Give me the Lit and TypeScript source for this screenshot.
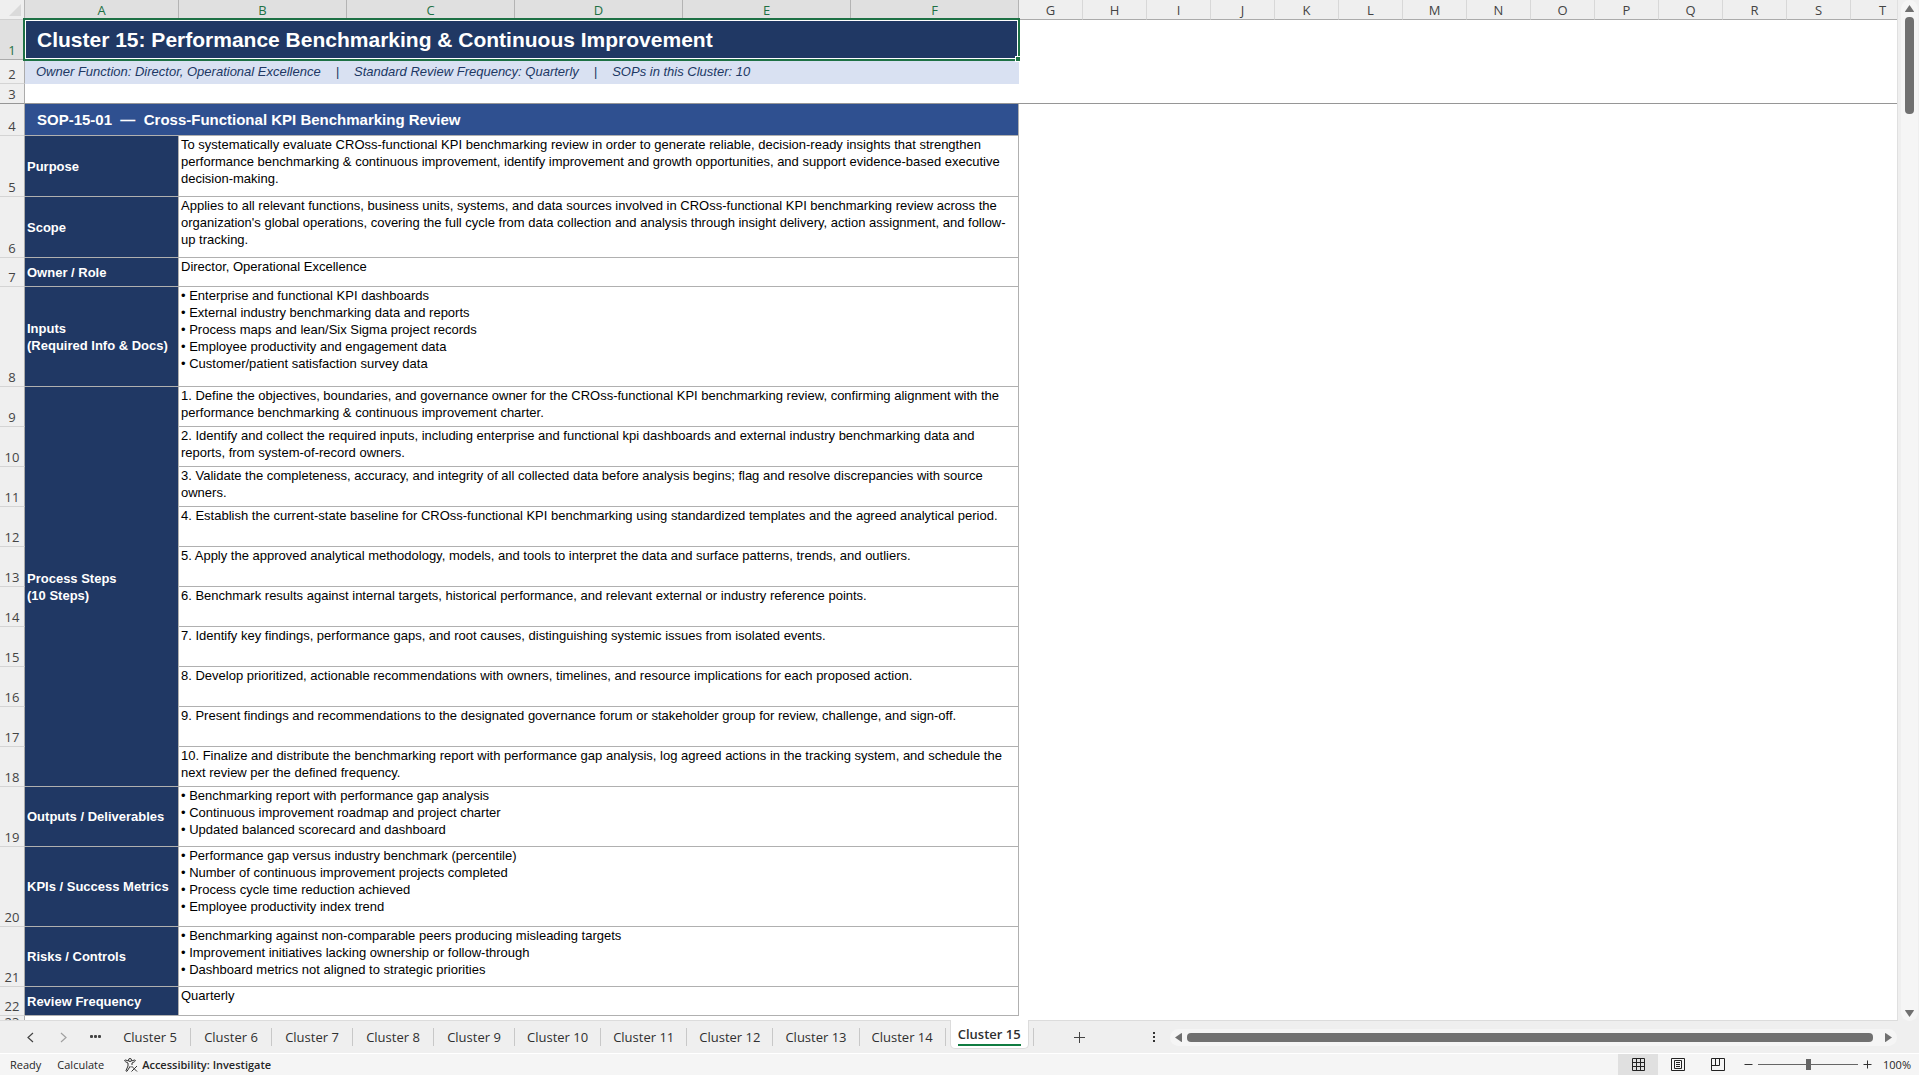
import { LitElement, html, css, svg, nothing } from "lit";
import { customElement, state } from "lit/decorators.js";
import { classMap } from "lit/directives/class-map.js";

interface SheetRow {
  n: number;
  height: number;
  label?: string;
  span?: number;
  lines: string[];
}

const MERGED_COLUMNS = ["A", "B", "C", "D", "E", "F"];
const PLAIN_COLUMNS = ["G", "H", "I", "J", "K", "L", "M", "N", "O", "P", "Q", "R", "S", "T"];

const ROWS: SheetRow[] = [
  {
    n: 5,
    height: 61,
    label: "Purpose",
    lines: [
      "To systematically evaluate CROss-functional KPI benchmarking review in order to generate reliable, decision-ready insights that strengthen",
      "performance benchmarking & continuous improvement, identify improvement and growth opportunities, and support evidence-based executive",
      "decision-making.",
    ],
  },
  {
    n: 6,
    height: 61,
    label: "Scope",
    lines: [
      "Applies to all relevant functions, business units, systems, and data sources involved in CROss-functional KPI benchmarking review across the",
      "organization's global operations, covering the full cycle from data collection and analysis through insight delivery, action assignment, and follow-",
      "up tracking.",
    ],
  },
  { n: 7, height: 29, label: "Owner / Role", lines: ["Director, Operational Excellence"] },
  {
    n: 8,
    height: 100,
    label: "Inputs\n(Required Info & Docs)",
    lines: [
      "• Enterprise and functional KPI dashboards",
      "• External industry benchmarking data and reports",
      "• Process maps and lean/Six Sigma project records",
      "• Employee productivity and engagement data",
      "• Customer/patient satisfaction survey data",
    ],
  },
  {
    n: 9,
    height: 40,
    label: "Process Steps\n(10 Steps)",
    span: 10,
    lines: [
      "1. Define the objectives, boundaries, and governance owner for the CROss-functional KPI benchmarking review, confirming alignment with the",
      "performance benchmarking & continuous improvement charter.",
    ],
  },
  {
    n: 10,
    height: 40,
    lines: [
      "2. Identify and collect the required inputs, including enterprise and functional kpi dashboards and external industry benchmarking data and",
      "reports, from system-of-record owners.",
    ],
  },
  {
    n: 11,
    height: 40,
    lines: [
      "3. Validate the completeness, accuracy, and integrity of all collected data before analysis begins; flag and resolve discrepancies with source",
      "owners.",
    ],
  },
  {
    n: 12,
    height: 40,
    lines: [
      "4. Establish the current-state baseline for CROss-functional KPI benchmarking using standardized templates and the agreed analytical period.",
    ],
  },
  {
    n: 13,
    height: 40,
    lines: [
      "5. Apply the approved analytical methodology, models, and tools to interpret the data and surface patterns, trends, and outliers.",
    ],
  },
  {
    n: 14,
    height: 40,
    lines: [
      "6. Benchmark results against internal targets, historical performance, and relevant external or industry reference points.",
    ],
  },
  {
    n: 15,
    height: 40,
    lines: [
      "7. Identify key findings, performance gaps, and root causes, distinguishing systemic issues from isolated events.",
    ],
  },
  {
    n: 16,
    height: 40,
    lines: [
      "8. Develop prioritized, actionable recommendations with owners, timelines, and resource implications for each proposed action.",
    ],
  },
  {
    n: 17,
    height: 40,
    lines: [
      "9. Present findings and recommendations to the designated governance forum or stakeholder group for review, challenge, and sign-off.",
    ],
  },
  {
    n: 18,
    height: 40,
    lines: [
      "10. Finalize and distribute the benchmarking report with performance gap analysis, log agreed actions in the tracking system, and schedule the",
      "next review per the defined frequency.",
    ],
  },
  {
    n: 19,
    height: 60,
    label: "Outputs / Deliverables",
    lines: [
      "• Benchmarking report with performance gap analysis",
      "• Continuous improvement roadmap and project charter",
      "• Updated balanced scorecard and dashboard",
    ],
  },
  {
    n: 20,
    height: 80,
    label: "KPIs / Success Metrics",
    lines: [
      "• Performance gap versus industry benchmark (percentile)",
      "• Number of continuous improvement projects completed",
      "• Process cycle time reduction achieved",
      "• Employee productivity index trend",
    ],
  },
  {
    n: 21,
    height: 60,
    label: "Risks / Controls",
    lines: [
      "• Benchmarking against non-comparable peers producing misleading targets",
      "• Improvement initiatives lacking ownership or follow-through",
      "• Dashboard metrics not aligned to strategic priorities",
    ],
  },
  { n: 22, height: 29, label: "Review Frequency", lines: ["Quarterly"] },
];

@customElement("sheet-grid")
class SheetGrid extends LitElement {
  static styles = css`
    :host {
      display: block;
      overflow: hidden;
      background: #fff;
      border-right: 1px solid #e0e0e0;
      border-bottom: 1px solid #dcdcdc;
      box-sizing: border-box;
    }
    table {
      table-layout: fixed;
      width: 1915px;
      border-collapse: separate;
      border-spacing: 0;
      font: 13px/17px "Liberation Sans", Arial, sans-serif;
      color: #000;
    }
    .c-head {
      width: 25px;
    }
    .c-label {
      width: 154px;
    }
    .c-wide {
      width: 168px;
    }
    .c-plain {
      width: 64px;
    }
    th,
    td {
      box-sizing: border-box;
      padding: 0;
      text-align: left;
      vertical-align: top;
      white-space: pre;
    }
    .row-head,
    .col-head {
      font: 13px/12px "Open Sans", "Noto Sans", sans-serif;
      color: #444;
      text-align: center;
      background: #efefef;
    }
    .col-head {
      height: 20px;
      vertical-align: bottom;
      padding-bottom: 3px;
      border-right: 1px solid #d8d8d8;
      border-bottom: 1px solid #ababab;
    }
    .col-head.on {
      background: #e0e0e0;
      color: #1e7145;
      border-right-color: #b4b4b4;
    }
    .corner {
      height: 20px;
      line-height: 0;
      white-space: normal;
      background: #efefef;
      border-right: 1px solid #b4b4b4;
      border-bottom: 1px solid #d0d0d0;
    }
    .corner svg {
      display: block;
      margin: 4px 0 0 9px;
    }
    .row-head {
      vertical-align: bottom;
      padding-bottom: 3px;
      border-right: 1px solid #ababab;
      border-bottom: 1px solid #d4d4d4;
    }
    .row-head.on {
      background: #e0e0e0;
      color: #1e7145;
      border-bottom-color: #ababab;
    }
    .row-head.last {
      padding-bottom: 0;
    }
    .frozen .row-head,
    .frozen td {
      border-bottom: 1px solid #969696;
    }
    .title {
      position: relative;
      height: 40px;
      background: #203864;
      color: #fff;
      font-size: 21px;
      line-height: 24px;
      font-weight: bold;
      vertical-align: middle;
      padding-left: 12px;
    }
    .selection {
      position: absolute;
      inset: -2px -1px -1px -2px;
      border: 2px solid #1e7145;
      box-shadow: inset 0 0 0 1px #fff;
      pointer-events: none;
      z-index: 1;
    }
    .handle {
      position: absolute;
      right: -3px;
      bottom: -3px;
      width: 4px;
      height: 4px;
      background: #1e7145;
      border: 1px solid #fff;
    }
    .meta {
      background: #d9e1f2;
      color: #203864;
      font-style: italic;
      vertical-align: middle;
      padding: 0 0 2px 11px;
    }
    .meta-items {
      display: flex;
      gap: 15px;
    }
    .section {
      background: #2f5090;
      color: #fff;
      font-size: 15px;
      font-weight: bold;
      vertical-align: middle;
      padding-left: 12px;
      border-right: 1px solid #b0b0b0;
      border-bottom: 1px solid #b0b0b0;
    }
    .label {
      background: #203864;
      color: #fff;
      font-weight: bold;
      vertical-align: middle;
      padding-left: 2px;
      border-right: 1px solid #b0b0b0;
      border-bottom: 1px solid #b0b0b0;
    }
    .value {
      padding-left: 2px;
      border-right: 1px solid #b0b0b0;
      border-bottom: 1px solid #b0b0b0;
    }
  `;

  private row(r: SheetRow) {
    return html`<tr style="height:${r.height}px">
      <th class="row-head" scope="row">${r.n}</th>
      ${r.label ? html`<th class="label" rowspan=${r.span ?? 1}>${r.label}</th>` : nothing}
      <td class="value" colspan="5">${r.lines.join("\n")}</td>
      <td colspan="14"></td>
    </tr>`;
  }

  render() {
    return html`<table>
      <colgroup>
        <col class="c-head" />
        <col class="c-label" />
        <col class="c-wide" span="5" />
        <col class="c-plain" span="14" />
      </colgroup>
      <thead>
        <tr>
          <td class="corner">
            <svg width="12" height="12" viewBox="0 0 12 12"><path d="M12 0V12H0Z" fill="#dadada" /></svg>
          </td>
          ${MERGED_COLUMNS.map((c) => html`<th class="col-head on" scope="col">${c}</th>`)}
          ${PLAIN_COLUMNS.map((c) => html`<th class="col-head" scope="col">${c}</th>`)}
        </tr>
      </thead>
      <tbody>
        <tr style="height:40px">
          <th class="row-head on" scope="row">1</th>
          <td class="title" colspan="6">Cluster 15: Performance Benchmarking &amp; Continuous Improvement<span class="selection"><span class="handle"></span></span></td>
          <td colspan="14"></td>
        </tr>
        <tr style="height:24px">
          <th class="row-head" scope="row">2</th>
          <td class="meta" colspan="6"><div class="meta-items"><span>Owner Function: Director, Operational Excellence</span><span>|</span><span>Standard Review Frequency: Quarterly</span><span>|</span><span>SOPs in this Cluster: 10</span></div></td>
          <td colspan="14"></td>
        </tr>
        <tr class="frozen" style="height:20px">
          <th class="row-head" scope="row">3</th>
          <td colspan="20"></td>
        </tr>
        <tr style="height:32px">
          <th class="row-head" scope="row">4</th>
          <td class="section" colspan="6">SOP-15-01  —  Cross-Functional KPI Benchmarking Review</td>
          <td colspan="14"></td>
        </tr>
        ${ROWS.map((r) => this.row(r))}
        <tr style="height:11px">
          <th class="row-head last" scope="row">23</th>
          <td colspan="20"></td>
        </tr>
      </tbody>
    </table>`;
  }
}

@customElement("scroll-track")
class ScrollTrack extends LitElement {
  static properties = { vertical: { type: Boolean, reflect: true } };
  declare vertical: boolean;

  static styles = css`
    :host {
      display: flex;
      align-items: center;
      background: #f5f5f5;
      border-radius: 9px;
      box-sizing: border-box;
      height: 17px;
      padding: 0 5px;
      gap: 5px;
    }
    :host([vertical]) {
      flex-direction: column;
      width: 17px;
      height: auto;
      padding: 5px 0 4px;
    }
    button {
      display: block;
      border: 0;
      padding: 0;
      background: none;
      line-height: 0;
      flex: none;
    }
    .lane {
      flex: 1;
      display: flex;
      min-width: 0;
      min-height: 0;
    }
    :host([vertical]) .lane {
      flex-direction: column;
    }
    .thumb {
      background: #707070;
      border-radius: 4px;
    }
    .thumb.h {
      height: 9px;
      flex: 1;
      margin-right: 7px;
    }
    .thumb.v {
      width: 9px;
      height: 97px;
    }
  `;

  render() {
    return this.vertical
      ? html`<button aria-label="Scroll up">
            <svg width="9" height="7" viewBox="0 0 9 7"><path d="M4.5 0L9 6.5Q9 7 8.5 7H.5Q0 7 0 6.5Z" fill="#707070" /></svg>
          </button>
          <div class="lane"><div class="thumb v"></div></div>
          <button aria-label="Scroll down">
            <svg width="9" height="7" viewBox="0 0 9 7"><path d="M4.5 7L9 .5Q9 0 8.5 0H.5Q0 0 0 .5Z" fill="#707070" /></svg>
          </button>`
      : html`<button aria-label="Scroll left">
            <svg width="7" height="9" viewBox="0 0 7 9"><path d="M0 4.5L6.5 0Q7 0 7 .5V8.5Q7 9 6.5 9Z" fill="#707070" /></svg>
          </button>
          <div class="lane"><div class="thumb h"></div></div>
          <button aria-label="Scroll right">
            <svg width="7" height="9" viewBox="0 0 7 9"><path d="M7 4.5L.5 0Q0 0 0 .5V8.5Q0 9 .5 9Z" fill="#707070" /></svg>
          </button>`;
  }
}

@customElement("sheet-tabs")
class SheetTabs extends LitElement {
  @state() private active = 15;

  static styles = css`
    :host {
      display: flex;
      height: 32px;
      background: #efefef;
      font: 13px/18px "Open Sans", "Noto Sans", sans-serif;
      color: #303030;
    }
    button {
      font: inherit;
      color: inherit;
      background: none;
      border: 0;
      padding: 0;
      flex: none;
    }
    .nav {
      display: flex;
      align-items: center;
      padding-left: 26px;
      gap: 22px;
      margin-right: 9px;
    }
    .nav button {
      line-height: 0;
    }
    .nav svg {
      display: block;
    }
    .tabs {
      display: flex;
      align-items: center;
    }
    .tab {
      box-sizing: border-box;
      min-width: 81px;
      height: 18px;
      padding: 0 12px;
      border-right: 1px solid #c8c8c8;
    }
    .tab.active {
      display: flex;
      align-items: flex-start;
      align-self: flex-start;
      min-width: 0;
      height: 29px;
      margin: -1px 4px 0 4px;
      padding: 5px 7px 0;
      background: #fff;
      border: 1px solid #dcdcdc;
      border-top: 0;
      border-radius: 0 0 5px 5px;
      font-weight: 600;
    }
    .name {
      display: block;
      line-height: 19px;
      border-bottom: 2px solid #107c41;
    }
    .end {
      width: 1px;
      height: 18px;
      background: #c8c8c8;
    }
    .add {
      margin-left: 39px;
    }
    .add svg,
    .more svg {
      display: block;
    }
    .more {
      margin-left: auto;
      margin-right: 15px;
    }
    scroll-track {
      align-self: center;
      width: calc(38% - 2px);
      flex: none;
      margin-right: 22px;
    }
  `;

  render() {
    const tabs = [5, 6, 7, 8, 9, 10, 11, 12, 13, 14, 15];
    return html`<div class="nav">
        <button aria-label="Previous sheets">
          <svg width="9" height="11" viewBox="0 0 9 11"><path d="M7 1L2 5.5L7 10" fill="none" stroke="#444" stroke-width="1.2" /></svg>
        </button>
        <button aria-label="Next sheets">
          <svg width="11" height="11" viewBox="0 0 11 11"><path d="M4 1L9 5.5L4 10" fill="none" stroke="#a0a0a0" stroke-width="1.2" /></svg>
        </button>
        <button aria-label="All sheets">
          <svg width="11" height="4" viewBox="0 0 11 4"><g fill="#444"><rect x="0" y="0" width="3" height="3" rx="1" /><rect x="4" y="0" width="3" height="3" rx="1" /><rect x="8" y="0" width="3" height="3" rx="1" /></g></svg>
        </button>
      </div>
      <div class="tabs">
        ${tabs.map(
          (n) => html`<button
            class=${classMap({ tab: true, active: n === this.active })}
            @click=${() => (this.active = n)}
          >${n === this.active ? html`<span class="name">Cluster ${n}</span>` : `Cluster ${n}`}</button>`
        )}
        <span class="end"></span>
      </div>
      <button class="add" aria-label="New sheet">
        <svg width="12" height="12" viewBox="0 0 12 12"><path d="M6.5 1V12M1 6.5H12" stroke="#444" stroke-width="1" /></svg>
      </button>
      <button class="more" aria-label="Resize tab strip">
        <svg width="2" height="10" viewBox="0 0 2 10"><path d="M0 0H2V2H0ZM0 4H2V6H0ZM0 8H2V10H0Z" fill="#333" /></svg>
      </button>
      <scroll-track></scroll-track>`;
  }
}

@customElement("status-bar")
class StatusBar extends LitElement {
  static styles = css`
    :host {
      display: flex;
      align-items: center;
      height: 21px;
      border-top: 1px solid #fff;
      background: #f5f5f5;
      padding: 0 8px 0 10px;
      font: 11px/16px "Open Sans", "Noto Sans", sans-serif;
      color: #262626;
    }
    button {
      font: inherit;
      color: inherit;
      background: none;
      border: 0;
      padding: 0;
      flex: none;
    }
    svg {
      display: block;
    }
    .calc {
      margin-left: 16px;
    }
    .access {
      display: flex;
      align-items: center;
      gap: 4px;
      margin-left: 20px;
      font-weight: 600;
    }
    .views {
      display: flex;
      align-self: stretch;
      margin-left: auto;
      margin-right: 6px;
    }
    .view {
      width: 40px;
      display: grid;
      place-items: center;
    }
    .view.active {
      background: #e0e0e0;
    }
    .zoom {
      appearance: none;
      width: 100px;
      height: 12px;
      margin: 0 5px;
      background: linear-gradient(#666, #666) center / 100% 1px no-repeat;
    }
    .zoom::-webkit-slider-thumb {
      appearance: none;
      width: 5px;
      height: 11px;
      background: #666;
    }
    .percent {
      margin-left: 11px;
    }
  `;

  render() {
    return html`<span>Ready</span>
      <button class="calc">Calculate</button>
      <button class="access">
        ${svg`<svg width="14" height="14" viewBox="0 0 14 14" fill="none" stroke="#333" stroke-width="1"><circle cx="6" cy="2" r="1.5"/><path d="M4.5 3L1.5 2Q.5 2 .7 3Q1 3.6 4 5V8L2 12.5Q2 13.5 3 13.3L6 8.5L7 9.5M7.5 3L10.5 2Q11.5 2 11.3 3Q11 3.6 8 5V7M7.5 8L13 13.5M13 8L7.5 13.5"/></svg>`}
        <span>Accessibility: Investigate</span>
      </button>
      <div class="views">
        <button class="view active" aria-label="Normal">
          ${svg`<svg width="13" height="13" viewBox="0 0 13 13" fill="none" stroke="#222"><path d="M.5 .5H12.5V12.5H.5ZM.5 4.5H12.5M.5 8.5H12.5M4.5 .5V12.5M8.5 .5V12.5"/></svg>`}
        </button>
        <button class="view" aria-label="Page Layout">
          ${svg`<svg width="14" height="13" viewBox="0 0 14 13" fill="none" stroke="#222"><path d="M.5 .5H13.5V12.5H.5ZM3.5 2.5H10.5V10.5H3.5ZM5 4.5H9M5 6.5H9M5 8.5H9"/></svg>`}
        </button>
        <button class="view" aria-label="Page Break Preview">
          ${svg`<svg width="14" height="13" viewBox="0 0 14 13" fill="none" stroke="#222"><path d="M.5 .5H13.5V12.5H.5ZM4.5 .5V7.5M8.5 .5V7.5M.5 7.5H8.5"/></svg>`}
        </button>
      </div>
      <button aria-label="Zoom out">
        <svg width="9" height="9" viewBox="0 0 9 9"><path d="M.5 4.5H8.5" stroke="#333" /></svg>
      </button>
      <input class="zoom" type="range" min="0" max="200" value="100" aria-label="Zoom" />
      <button aria-label="Zoom in">
        <svg width="9" height="9" viewBox="0 0 9 9"><path d="M.5 4.5H8.5M4.5 .5V8.5" stroke="#333" /></svg>
      </button>
      <button class="percent">100%</button>`;
  }
}

@customElement("app-root")
class AppRoot extends LitElement {
  static styles = css`
    :host {
      display: flex;
      flex-direction: column;
      height: 100vh;
      background: #efefef;
      overflow: hidden;
    }
    .work {
      flex: 1;
      min-height: 0;
      display: flex;
    }
    sheet-grid {
      flex: 1;
      min-width: 0;
    }
    .side {
      display: flex;
      flex: none;
      padding: 0 1px 0 3px;
    }
    sheet-tabs,
    status-bar {
      flex: none;
    }
  `;

  render() {
    return html`<div class="work">
        <sheet-grid></sheet-grid>
        <div class="side"><scroll-track vertical></scroll-track></div>
      </div>
      <sheet-tabs></sheet-tabs>
      <status-bar></status-bar>`;
  }
}
